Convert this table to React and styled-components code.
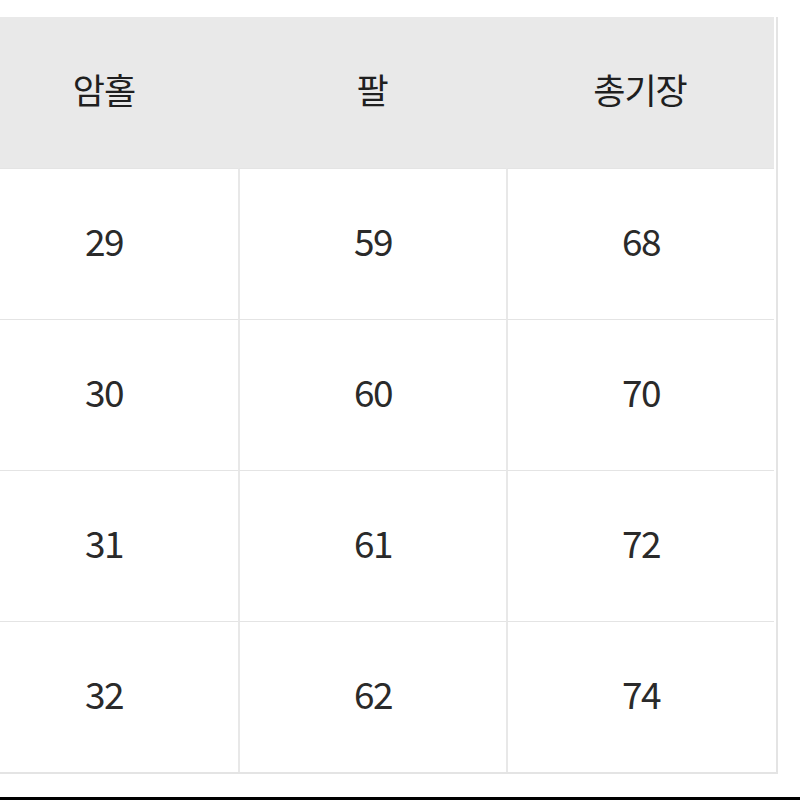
import styled, { createGlobalStyle } from "styled-components";

const GlobalStyle = createGlobalStyle`
    html, body {
        margin: 0;
        padding: 0;
        background: #ffffff;
        overflow: hidden;
    }
`;

const Page = styled.div`
    width: 800px;
    height: 800px;
    display: flex;
    flex-direction: column;
    overflow: hidden;
    padding-top: 17px;
    box-sizing: border-box;
    font-family: "Noto Sans CJK KR", "Noto Sans", sans-serif;
    color: #2a2a2a;
`;

const Table = styled.div`
    width: 806px;
    margin-left: -30px;
    display: grid;
    grid-template-columns: 268px 268px 268px;
    border-right: 2px solid #e4e4e4;
    border-bottom: 2px solid #e4e4e4;
`;

const HeadCell = styled.div`
    height: 151px;
    background: #e9e9e9;
    display: flex;
    align-items: center;
    justify-content: center;
    font-size: 35px;
    font-weight: 400;
    color: #1f1f1f;
    letter-spacing: -1px;
    padding-bottom: 8px;
    box-sizing: border-box;
`;

const Cell = styled.div`
    height: 151px;
    display: flex;
    align-items: center;
    justify-content: center;
    font-size: 37px;
    font-weight: 400;
    letter-spacing: -1.5px;
    border-top: 1px solid #e4e4e4;
    border-left: ${(p) => (p.$first ? "none" : "2px solid #e8e8e8")};
    padding-bottom: 8px;
    box-sizing: border-box;
`;

const BottomBar = styled.div`
    margin-top: auto;
    height: 3px;
    background: #000;
`;

const heads = ["암홀", "팔", "총기장"];
const rows = [
    ["29", "59", "68"],
    ["30", "60", "70"],
    ["31", "61", "72"],
    ["32", "62", "74"],
];

const App = () => {
    return (
        <>
            <GlobalStyle />
            <Page>
                <Table>
                    {heads.map((h) => (
                        <HeadCell key={h}>{h}</HeadCell>
                    ))}
                    {rows.map((r, i) =>
                        r.map((v, j) => (
                            <Cell key={i + "-" + j} $first={j === 0}>
                                {v}
                            </Cell>
                        ))
                    )}
                </Table>
                <BottomBar />
            </Page>
        </>
    );
};

export default App;
